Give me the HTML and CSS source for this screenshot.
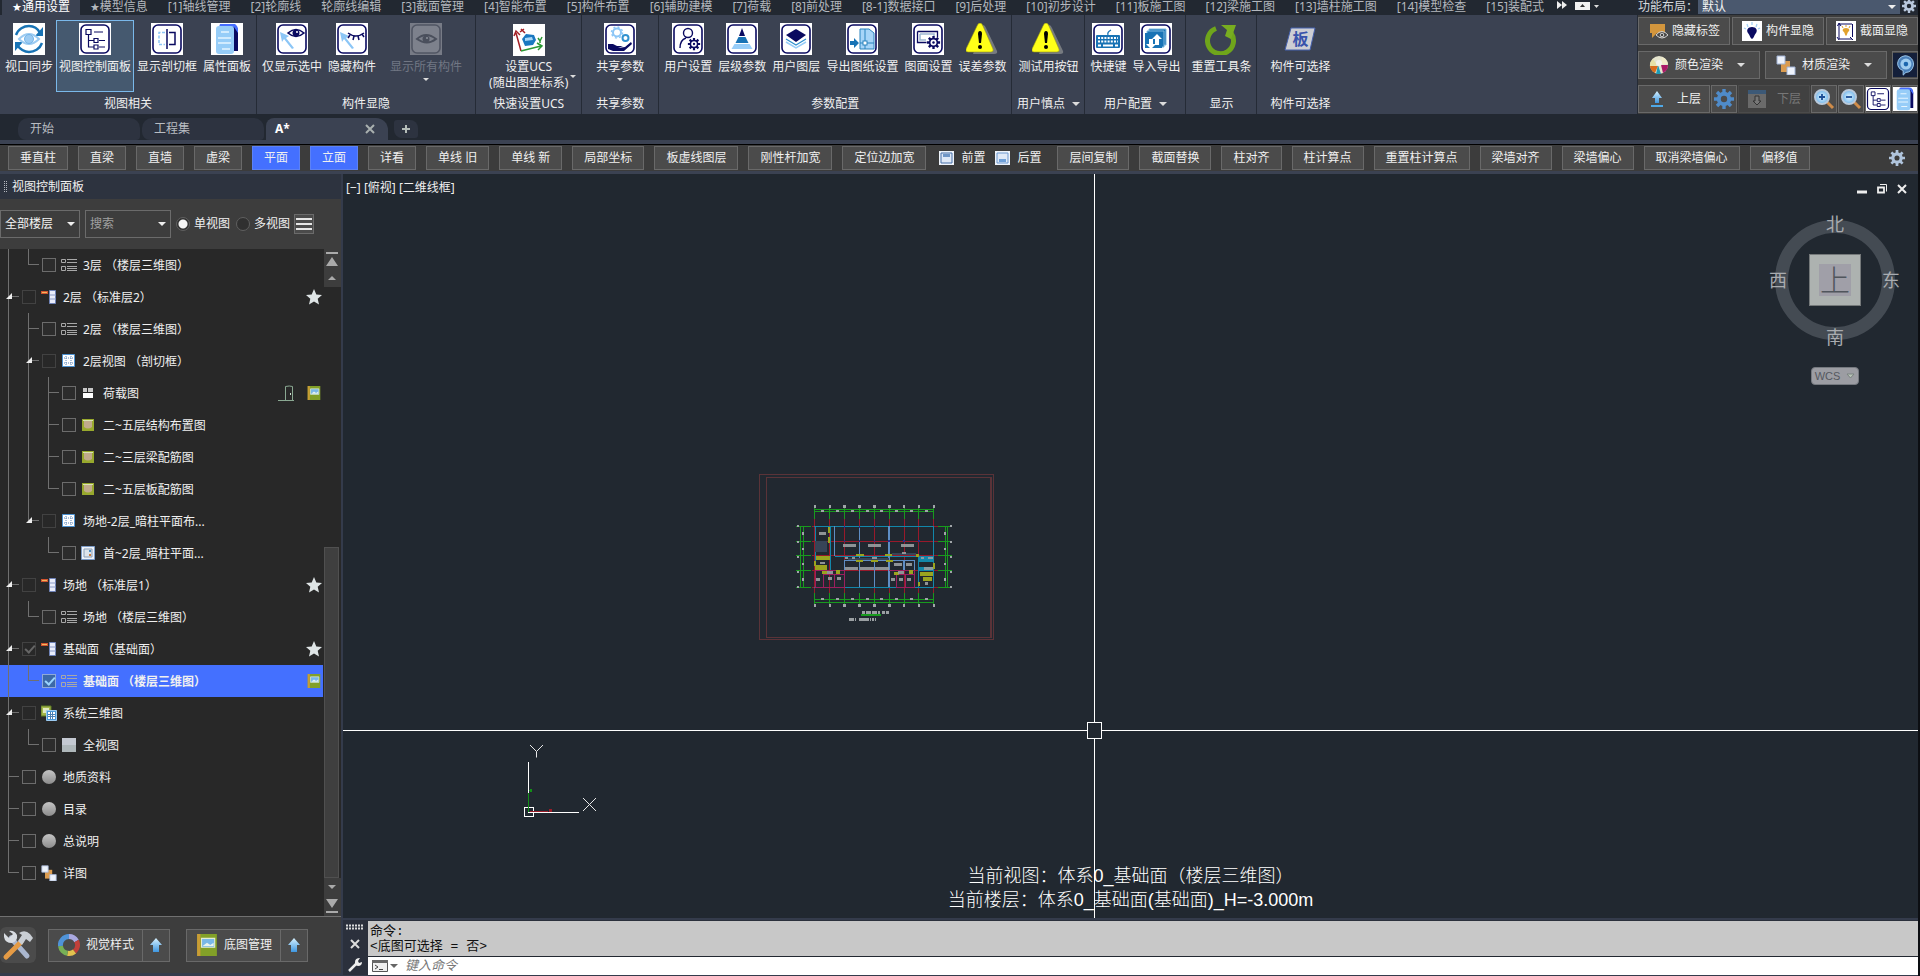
FILE: index.html
```html
<!DOCTYPE html>
<html lang="zh-CN">
<head>
<meta charset="utf-8">
<title>A*</title>
<link rel="stylesheet" href="styles.css">
</head>
<body>
<svg class="defs" aria-hidden="true">
  <defs>
    <linearGradient id="gBall" x1="0" y1="0" x2="0" y2="1"><stop offset="0" stop-color="#c4c4c4"/><stop offset="1" stop-color="#8c8c8c"/></linearGradient>
    <linearGradient id="gArrow" x1="0" y1="0" x2="0" y2="1"><stop offset="0" stop-color="#d8f2ff"/><stop offset="1" stop-color="#3d96e0"/></linearGradient>
    <radialGradient id="gLens"><stop offset="0" stop-color="#e8f8ff"/><stop offset="1" stop-color="#6db4ec"/></radialGradient>
  </defs>
  <symbol id="sync" viewBox="0 0 32 32"><rect width="32" height="32" fill="#fff"/><path d="M3 12C5 6 11 3 16 3c5 0 9 3 11 7M29 20c-2 6-8 9-13 9-5 0-9-3-12-7" fill="none" stroke="#1873b5" stroke-width="2.400"/><path d="M30 4v9h-8zM2 28v-9h8z" fill="#1873b5"/><path d="M6 16q10-10 20 0-10 10-20 0z" fill="#fff" stroke="#9ccbf2" stroke-width="2"/><circle cx="16" cy="16" r="4.500" fill="#9ccbf2" stroke="#74b4e8"/></symbol>
  <symbol id="tree" viewBox="0 0 32 32"><rect width="32" height="32" fill="#fff"/><rect x="2" y="2" width="28" height="28" rx="5" fill="#fff" stroke="#0a0a60" stroke-width="1.600"/><path d="M7 6.500h5v5H7zM9.500 11.500v12.500h5M9.500 17.500h5M15 15.500h4v4h-4zM15 22h4v4h-4zM15 9h9M20 17.500h6M20 24h6" fill="none" stroke="#0a0a60" stroke-width="1.200"/></symbol>
  <symbol id="clip" viewBox="0 0 32 32"><rect width="32" height="32" fill="#fff"/><rect x="2" y="2" width="28" height="28" rx="5" fill="#fff" stroke="#0a0a60" stroke-width="1.600"/><path d="M14 9.500H8v12h6" fill="none" stroke="#8ec6f5" stroke-width="1.500" stroke-dasharray="3 1.500"/><path d="M16 6v20M18 9.500h6v12h-6" fill="none" stroke="#0a0a60" stroke-width="1.500"/></symbol>
  <symbol id="props" viewBox="0 0 32 32"><rect width="32" height="32" fill="#fff"/><path d="M10 1h12q5 2 5 7v20h-4V6H8z" fill="#0a0a60"/><path d="M9 1h15q3 2 3 6v3l-4-6H8z" fill="#456dff"/><rect x="5" y="3" width="18" height="28" rx="3" fill="#97cdf8"/><path d="M10 9h8M7 15h13M7 20h13M11 26h8" stroke="#e6f5ff" stroke-width="1.500"/></symbol>
  <symbol id="pickEye" viewBox="0 0 32 32"><rect width="32" height="32" fill="#fff"/><rect x="2" y="2" width="28" height="28" rx="5" fill="#fff" stroke="#0a0a60" stroke-width="1.600"/><path d="M4 9l9 4-3 2 8 10-2 1-8-10-2 3z" fill="#8cc6f6"/><path d="M12 10q8-7 16 0-8 7-16 0z" fill="#fff" stroke="#0a0a60" stroke-width="1.600"/><circle cx="20" cy="10" r="3.500" fill="#0a0a60"/><circle cx="21" cy="9" r="1" fill="#fff"/></symbol>
  <symbol id="hideEye" viewBox="0 0 32 32"><rect width="32" height="32" fill="#fff"/><rect x="2" y="2" width="28" height="28" rx="5" fill="#fff" stroke="#0a0a60" stroke-width="1.600"/><path d="M4 9l9 4-3 2 8 10-2 1-8-10-2 3z" fill="#8cc6f6"/><path d="M12 10q8 6 16 0M14 12l-2 3M18 13l-1 4M22 13l1 4M26 11l2 3" fill="none" stroke="#0a0a60" stroke-width="1.500"/></symbol>
  <symbol id="allEye" viewBox="0 0 32 32"><rect width="32" height="32" fill="#777b86"/><rect x="2" y="2" width="28" height="28" rx="5" fill="#7d818c" stroke="#505563" stroke-width="1.600"/><path d="M7 16q9-8 19 0-9 7-19 0z" fill="none" stroke="#4a4f5c" stroke-width="2"/><circle cx="16" cy="16" r="3.500" fill="#4a4f5c"/><circle cx="17" cy="15" r="1" fill="#8c909a"/></symbol>
  <symbol id="ucs" viewBox="0 0 32 32"><rect width="32" height="32" fill="#fff"/><path d="M8 27L3 9M1 12l2-5 4 4M7 8l4-3M8 5l4 4" fill="none" stroke="#a31f25" stroke-width="1.500"/><path d="M8 27l20-5M24 19l5 3-4 4M25 14l2 3 2-4M27 17v2" fill="none" stroke="#2b9a35" stroke-width="1.500"/><path d="M9 15l4-5 8 1 2 5-3 5-8 1z" fill="#1a78c0"/><path d="M12 14l7-1 1 3-8 1z" fill="#a9d7f7"/></symbol>
  <symbol id="share" viewBox="0 0 32 32"><rect width="32" height="32" fill="#fff"/><rect x="2" y="2" width="28" height="28" rx="5" fill="#fff" stroke="#0a0a60" stroke-width="1.600"/><circle cx="13" cy="9.500" r="4" fill="none" stroke="#8cc6f6" stroke-width="2"/><circle cx="13" cy="9.500" r="5.500" fill="none" stroke="#8cc6f6" stroke-width="1.500" stroke-dasharray="2 2.300"/><circle cx="21.500" cy="15" r="3" fill="none" stroke="#3191cf" stroke-width="2"/><path d="M4 21h5l4 2h6l-5 2 7-1 6-5 1 2-8 7H9l-5-2z" fill="#0a0a60"/></symbol>
  <symbol id="gearS" viewBox="0 0 16 16"><circle cx="8" cy="8" r="5" fill="#0a0a60"/><path d="M8 1v14M1 8h14M3 3l10 10M13 3L3 13" stroke="#0a0a60" stroke-width="2.500"/><circle cx="8" cy="8" r="3.200" fill="#fff"/><circle cx="8" cy="8" r="1.300" fill="#0a0a60"/></symbol>
  <symbol id="user" viewBox="0 0 32 32"><rect width="32" height="32" fill="#fff"/><rect x="2" y="2" width="28" height="28" rx="5" fill="#fff" stroke="#0a0a60" stroke-width="1.600"/><circle cx="16" cy="10" r="4.500" fill="none" stroke="#0a0a60" stroke-width="1.400"/><path d="M8 25q0-8 6-10" fill="none" stroke="#0a0a60" stroke-width="1.400"/><use href="#gearS" x="15" y="14" width="14" height="14"/></symbol>
  <symbol id="level" viewBox="0 0 32 32"><rect width="32" height="32" fill="#fff"/><rect x="2" y="2" width="28" height="28" rx="5" fill="#fff" stroke="#0a0a60" stroke-width="1.600"/><path d="M16 5l3 8h-6z" fill="#0a0a60"/><path d="M12.500 14h7l3 6h-13z" fill="#1873b5"/><path d="M8.500 21h15l3 5h-21z" fill="#97cdf8"/></symbol>
  <symbol id="layers" viewBox="0 0 32 32"><rect width="32" height="32" fill="#fff"/><rect x="2" y="2" width="28" height="28" rx="5" fill="#fff" stroke="#0a0a60" stroke-width="1.600"/><path d="M16 6l10 6-10 7-10-7z" fill="#0a0a60"/><path d="M6 16l10 6 10-6" fill="none" stroke="#3191cf" stroke-width="1.300"/><path d="M6 19l10 6 10-6" fill="none" stroke="#97cdf8" stroke-width="1.500"/></symbol>
  <symbol id="sheet" viewBox="0 0 32 32"><rect width="32" height="32" fill="#fff"/><rect x="2" y="2" width="28" height="28" rx="5" fill="#fff" stroke="#0a0a60" stroke-width="1.600"/><path d="M14 6h9l5 4v16H14z" fill="#a7d5f8" stroke="#2b83bd"/><path d="M19 6v20M14 20h14" stroke="#2b83bd"/><rect x="17" y="18" width="4" height="4" fill="#fff" stroke="#2b83bd"/><path d="M4 18h4v-3l5 5-5 5v-3H4z" fill="#1873b5"/></symbol>
  <symbol id="draw" viewBox="0 0 32 32"><rect width="32" height="32" fill="#fff"/><rect x="2" y="2" width="28" height="28" rx="5" fill="#fff" stroke="#0a0a60" stroke-width="1.600"/><path d="M5.500 8.500h20v6M5.500 8.500v11h9" fill="none" stroke="#0a0a60" stroke-width="1.300"/><path d="M8 11h14v3M8 11v6h6" fill="none" stroke="#9db7d2" stroke-width="1.500"/><use href="#gearS" x="14" y="12" width="15" height="15"/></symbol>
  <symbol id="warn" viewBox="0 0 32 32"><path d="M17 2q2 0 3 3l11 23q1 3-3 3H7z" fill="#777b80"/><path d="M14 0q2 0 3 3l10 23q1 3-2 3H2q-3 0-2-3L11 3q1-3 3-3z" fill="#ffff18" stroke="#9a9a10" stroke-width=".600"/><path d="M12 11q0-3 2-3t2 3l-1 9h-2z"/><circle cx="14" cy="24" r="2"/></symbol>
  <symbol id="keys" viewBox="0 0 32 32"><rect width="32" height="32" fill="#fff"/><rect x="2" y="2" width="28" height="28" rx="5" fill="#fff" stroke="#0a0a60" stroke-width="1.600"/><path d="M16 12q-1-3 3-5" fill="none" stroke="#1873b5" stroke-width="1.300"/><rect x="4" y="12" width="24" height="13" rx="1" fill="#1873b5"/><path d="M6 15h20M6 18.500h20" stroke="#fff" stroke-width="2" stroke-dasharray="2 1.200"/><path d="M6 22.500h3M11 22.500h10M23 22.500h3" stroke="#fff" stroke-width="2"/></symbol>
  <symbol id="inout" viewBox="0 0 32 32"><rect width="32" height="32" fill="#fff"/><rect x="2" y="2" width="28" height="28" rx="5" fill="#fff" stroke="#0a0a60" stroke-width="1.600"/><path d="M9 6h17v16H9z" fill="#1873b5" stroke="#7cb8df"/><path d="M7 8h17v16H7z" fill="#1873b5" stroke="#7cb8df"/><path d="M5 10h17v15H5z" fill="#1873b5"/><path d="M17 11l5 5h-3v6h-4v-6h-3zM11 26l-5-5h3v-5h4v5h3z" fill="#fff"/></symbol>
  <symbol id="reset" viewBox="0 0 32 32"><path d="M11 5.500A13 13 0 1 0 26 10" fill="none" stroke="#6fa51b" stroke-width="5"/><path d="M16 2h15l-5 14-6-3 2-6z" fill="#78ad20"/></symbol>
  <symbol id="slab" viewBox="0 0 32 32"><path d="M7 5h24l-5 22H1z" fill="#cdced4" stroke="#4560ad"/></symbol>
  <symbol id="gear" viewBox="0 0 20 20"><g stroke="currentColor"><circle cx="10" cy="10" r="5.200" fill="none" stroke-width="4"/><path d="M10 0v4M10 16v4M0 10h4M16 10h4M3 3l3 3M14 14l3 3M17 3l-3 3M6 14l-3 3" stroke-width="3.400"/></g></symbol>
  <symbol id="tag" viewBox="0 0 20 20"><path d="M2 3h15v9H9l-5 5v-5H2z" fill="#d3963d"/><path d="M8 14q6-7 12 0-6 6-12 0z" fill="#454545" stroke="#d4d4d4"/><circle cx="14" cy="14" r="1.800" fill="none" stroke="#d4d4d4"/></symbol>
  <symbol id="bulb" viewBox="0 0 20 20"><rect width="20" height="20" fill="#fff"/><path d="M10 6c4 0 6 3 4 6-2 2-2 5-4 6-2-1-2-4-4-6-2-3 0-6 4-6z" fill="#0a0a60"/><path d="M10 1v3M5 3l1 3M15 3l-1 3M2 7l2 1M18 7l-2 1" stroke="#a5d2f5" stroke-width="1.300"/></symbol>
  <symbol id="secBulb" viewBox="0 0 20 20"><rect width="20" height="20" fill="#fff"/><path d="M3 3h13M3 3v15h13M16.500 3v13M1.500 5L3 2l2 3M1 16l2 3M14 16l3 3" fill="none" stroke="#0a0a60"/><path d="M10 7c4 0 4 3 2 4-1 2-1 3-2 4-1-1-1-2-2-4-2-1-2-4 2-4z" fill="#e1a12c"/><path d="M10 4v2M6 5l1 2M14 5l-1 2" stroke="#e1a12c"/></symbol>
  <symbol id="ball" viewBox="0 0 20 20"><circle cx="10" cy="10" r="9" fill="#e6e5cf"/><path d="M4 4a9 9 0 0 0-3 8l7-2z" fill="#e8e1a5"/><path d="M1 11a9 9 0 0 0 5 7l3-7z" fill="#d96b1c"/><path d="M13 2a9 9 0 0 1 6 7l-7 0z" fill="#f0eac9"/><path d="M19 10a9 9 0 0 1-5 8l-2-8z" fill="#a91867"/><path d="M9 10l3 9H7z" fill="#1e9bb5"/><circle cx="10" cy="8" r="3" fill="#f3f2ea"/></symbol>
  <symbol id="mats" viewBox="0 0 20 20"><path d="M5 6h9v11H5z" fill="#db9c50"/><path d="M1 1h8v8H1zM11 12h8v8h-8z" fill="#eef3fc" stroke="#9fb1d3"/></symbol>
  <symbol id="orb" viewBox="0 0 26 26"><rect width="26" height="26" fill="#141f3a"/><path d="M13 3a9 9 0 0 1 9 11q-2 7-8 7l-3 3v-5Q5 17 5 11q1-7 8-8z" fill="#4a7fb9" stroke="#a4cef0"/><circle cx="14" cy="12" r="6" fill="#9fcdf0"/><circle cx="14" cy="12" r="2.500" fill="#1b66ae"/></symbol>
  <symbol id="up" viewBox="0 0 20 20"><path d="M10 2l5 7h-3v5H8V9H5z" fill="url(#gArrow)"/><path d="M4 17h12" stroke="#4fa8e6" stroke-width="2"/></symbol>
  <symbol id="down" viewBox="0 0 20 20"><path d="M1 1h18v18H1z" fill="#6a6a6a"/><path d="M1 1h18v4H1z" fill="#3c5977"/><path d="M10 16l-4-4h2V7h4v5h2z" fill="#777" stroke="#333"/></symbol>
  <symbol id="zin" viewBox="0 0 22 22"><path d="M14 14l6 6" stroke="#cf8c4a" stroke-width="3"/><circle cx="9" cy="9" r="7" fill="url(#gLens)" stroke="#b8c9db" stroke-width="2"/><path d="M9 6v6M6 9h6" stroke="#1b4d96" stroke-width="1.800"/></symbol>
  <symbol id="zout" viewBox="0 0 22 22"><path d="M14 14l6 6" stroke="#cf8c4a" stroke-width="3"/><circle cx="9" cy="9" r="7" fill="url(#gLens)" stroke="#b8c9db" stroke-width="2"/><path d="M6 9h6" stroke="#1b4d96" stroke-width="1.800"/></symbol>
  <symbol id="front" viewBox="0 0 16 16"><path d="M0 1h15v14H0z" fill="#eef3fa"/><path d="M2 3h11v10H2z" fill="#dfe9f7" stroke="#456fa8"/><path d="M4 4h7v3H4z" fill="#6f96c6"/></symbol>
  <symbol id="back" viewBox="0 0 16 16"><path d="M0 1h15v14H0z" fill="#eef3fa"/><path d="M2 3h11v10H2z" fill="#dfe9f7" stroke="#6d98cf"/><path d="M4 9h7v3H4z" fill="#6fa0d8"/></symbol>
  <symbol id="list" viewBox="0 0 16 14"><path d="M.500 1.500h4v3h-4zM.500 8.500h4v4h-4z" fill="none" stroke="#a8a8a8"/><path d="M6 1.500h10M6 4.500h10M6 8.500h10M6 10.500h10M6 12.500h10" stroke="#a8a8a8"/></symbol>
  <symbol id="floor" viewBox="0 0 16 16"><path d="M0 3.500h7" stroke="#d2552f" stroke-width="3"/><path d="M1 3.500h5" stroke="#f1b75d"/><path d="M8.500 1.500h6v13h-6z" fill="#e9edfb" stroke="#6f83b8"/><path d="M9 6h6M9 10h6" stroke="#8c9cc8"/></symbol>
  <symbol id="grid" viewBox="0 0 16 16"><path d="M1.500 1.500h12v12h-12z" fill="#fff" stroke="#4e93d2"/><path d="M3 5h10M3 10h10M5 3v10M10 3v10" stroke="#5b84b8" stroke-dasharray="1 1"/></symbol>
  <symbol id="load" viewBox="0 0 16 16"><path d="M2 3h4v4H2zM7 3h5v4H7z" fill="#c8c8c8"/><path d="M2 8h10v5H2z" fill="#fff"/></symbol>
  <symbol id="fig" viewBox="0 0 16 16"><path d="M1 2h12v12H1z" fill="#98a92d"/><path d="M3 4h8v6q-4 3-8 0z" fill="#c0aa8c"/><path d="M2 3.500h10" stroke="#d9e3b0"/></symbol>
  <symbol id="plan" viewBox="0 0 16 16"><path d="M.500 1.500h13v13H.500z" fill="#eef3fa" stroke="#7d9cc8"/><path d="M3 4h8v8H3z" fill="#dde4ec" stroke="#8a9db5"/><path d="M8 5h2v2H8z" fill="#4a8fc4"/><path d="M8 9h2v2H8z" fill="#c97b3e"/></symbol>
  <symbol id="sys" viewBox="0 0 16 16"><path d="M0 1h10v10H0z" fill="#a4b64b" stroke="#5d7a22"/><path d="M2 3h6v5H2z" fill="#e1e9c0"/><path d="M5.500 5.500h10v10h-10z" fill="#4b9ad9" stroke="#9ccaf0"/><path d="M7 7h7v7H7z" fill="#fff"/><path d="M7 9.500h7M7 11.500h7M9.500 7v7M11.500 7v7" stroke="#4b80b4"/></symbol>
  <symbol id="full" viewBox="0 0 16 16"><path d="M1 1h14v14H1z" fill="#c4c9d2"/><path d="M1 8h14v7H1z" fill="#aeb7ba"/></symbol>
  <symbol id="dot" viewBox="0 0 16 16"><circle cx="8" cy="8" r="7" fill="url(#gBall)"/></symbol>
  <symbol id="star" viewBox="0 0 16 16"><path d="M8 0l2.300 5.400 5.700.500-4.300 3.900L13 15.500 8 12.500l-5 3 1.300-5.700L0 5.900l5.700-.500z" fill="#dfe5e6"/></symbol>
  <symbol id="door" viewBox="0 0 16 16"><path d="M0 15.500h16M7.500 15V1.500q4-1 7 0V15" fill="none" stroke="#8aa892"/><path d="M12 8h1v2h-1z" fill="#cfe2d3"/></symbol>
  <symbol id="pic" viewBox="0 0 20 20"><path d="M1 0h18v20H1z" fill="#82a028"/><path d="M1 0h3v20H1z" fill="#c99c35"/><path d="M5 4h12v8H5z" fill="#79b8e8" stroke="#e3ecd4"/><path d="M6 11l4-3 3 2 3-2v3z" fill="#e8f3ee"/></symbol>
  <symbol id="wheel" viewBox="0 0 22 22"><g fill="none" stroke-width="5"><path d="M11 2.500a8.500 8.500 0 0 1 7.500 4.500" stroke="#a9a8e0"/><path d="M18.500 7a8.500 8.500 0 0 1-2 10.500" stroke="#c1403a"/><path d="M16.500 17.500a8.500 8.500 0 0 1-7 1.800" stroke="#e2c24e"/><path d="M9.500 19.300a8.500 8.500 0 0 1-7-7.300" stroke="#77b056"/><path d="M2.500 12A8.500 8.500 0 0 1 11 2.500" stroke="#4f93d8"/></g></symbol>
  <symbol id="tools" viewBox="0 0 32 32"><path d="M9 9l16 18" stroke="#aab7cf" stroke-width="5" stroke-linecap="round"/><path d="M2 4l5 5 4-4-4-3q5-1 8 4 1 6-5 8Q3 14 2 8z" fill="#d9dde2"/><path d="M4 28L19 13" stroke="#e59b45" stroke-width="5" stroke-linecap="round"/><path d="M17 4q6-4 11 1l3 4-3 4-4-3-4 6-4-4 4-6z" fill="#c9ced4"/></symbol>
</svg>

<header class="menubar">
  <nav class="menus">
    <a class="menu active" href="#"><span class="st">★</span>通用设置</a><a class="menu" href="#"><span class="st">★</span>模型信息</a><a class="menu" href="#">[1]轴线管理</a><a class="menu" href="#">[2]轮廓线</a><a class="menu" href="#">轮廓线编辑</a><a class="menu" href="#">[3]截面管理</a><a class="menu" href="#">[4]智能布置</a><a class="menu" href="#">[5]构件布置</a><a class="menu" href="#">[6]辅助建模</a><a class="menu" href="#">[7]荷载</a><a class="menu" href="#">[8]前处理</a><a class="menu" href="#">[8-1]数据接口</a><a class="menu" href="#">[9]后处理</a><a class="menu" href="#">[10]初步设计</a><a class="menu" href="#">[11]板施工图</a><a class="menu" href="#">[12]梁施工图</a><a class="menu" href="#">[13]墙柱施工图</a><a class="menu" href="#">[14]模型检查</a><a class="menu" href="#">[15]装配式</a>
    <svg class="more" viewBox="0 0 42 12"><path d="M0 1l5 4-5 4zM5 1l5 4-5 4z" fill="#eee"/><path d="M18 2h15v8H18z" fill="#f2f2f2"/><path d="M23 7l2.500-3 2.500 3z" fill="#333"/><path d="M37 5h5l-2.500 3z" fill="#ddd"/></svg>
  </nav>
  <div class="layout-pick">
    <label for="layout">功能布局：</label>
    <span class="pick"><select id="layout"><option>默认</option></select></span>
    <button class="bare" aria-label="设置"><svg class="i14"><use href="#gear"/></svg></button>
  </div>
</header>

<section class="ribbon">
  <div class="group"><div class="btns">
    <button class="rb"><svg class="i32"><use href="#sync"/></svg>视口同步</button>
    <button class="rb on"><svg class="i32"><use href="#tree"/></svg>视图控制面板</button>
    <button class="rb"><svg class="i32"><use href="#clip"/></svg>显示剖切框</button>
    <button class="rb"><svg class="i32"><use href="#props"/></svg>属性面板</button></div><div class="gname">视图相关</div></div>
  <div class="group"><div class="btns">
    <button class="rb"><svg class="i32"><use href="#pickEye"/></svg>仅显示选中</button>
    <button class="rb"><svg class="i32"><use href="#hideEye"/></svg>隐藏构件</button>
    <button class="rb roomy" disabled><svg class="i32"><use href="#allEye"/></svg>显示所有构件<i class="tri"></i></button></div><div class="gname">构件显隐</div></div>
  <div class="group"><div class="btns">
    <button class="rb roomy two"><svg class="i32"><use href="#ucs"/></svg>设置UCS<br>(随出图坐标系)<i class="tri side"></i></button></div><div class="gname">快速设置UCS</div></div>
  <div class="group snug"><div class="btns">
    <button class="rb roomy"><svg class="i32"><use href="#share"/></svg>共享参数<i class="tri"></i></button></div><div class="gname">共享参数</div></div>
  <div class="group"><div class="btns">
    <button class="rb"><svg class="i32"><use href="#user"/></svg>用户设置</button>
    <button class="rb"><svg class="i32"><use href="#level"/></svg>层级参数</button>
    <button class="rb"><svg class="i32"><use href="#layers"/></svg>用户图层</button>
    <button class="rb"><svg class="i32"><use href="#sheet"/></svg>导出图纸设置</button>
    <button class="rb"><svg class="i32"><use href="#draw"/></svg>图面设置</button>
    <button class="rb"><svg class="i32"><use href="#warn"/></svg>误差参数</button></div><div class="gname">参数配置</div></div>
  <div class="group snug"><div class="btns">
    <button class="rb"><svg class="i32"><use href="#warn"/></svg>测试用按钮</button></div><div class="gname">用户慎点<i class="tri big"></i></div></div>
  <div class="group"><div class="btns">
    <button class="rb"><svg class="i32"><use href="#keys"/></svg>快捷键</button>
    <button class="rb"><svg class="i32"><use href="#inout"/></svg>导入导出</button></div><div class="gname">用户配置<i class="tri big"></i></div></div>
  <div class="group"><div class="btns">
    <button class="rb"><svg class="i32"><use href="#reset"/></svg>重置工具条</button></div><div class="gname">显示</div></div>
  <div class="group last"><div class="btns">
    <button class="rb roomy"><span class="slab"><svg class="i32"><use href="#slab"/></svg><b>板</b></span>构件可选择<i class="tri"></i></button></div><div class="gname">构件可选择</div></div>

  <aside class="quick">
    <div class="qrow even">
      <button><svg class="i20"><use href="#tag"/></svg>隐藏标签</button>
      <button><svg class="i20"><use href="#bulb"/></svg>构件显隐</button>
      <button><svg class="i20"><use href="#secBulb"/></svg>截面显隐</button>
    </div>
    <div class="qrow render">
      <button class="wide"><svg class="i20"><use href="#ball"/></svg>颜色渲染<i class="tri big"></i></button>
      <button class="wide"><svg class="i20"><use href="#mats"/></svg>材质渲染<i class="tri big"></i></button>
      <button class="sq" aria-label="渲染"><svg class="i24"><use href="#orb"/></svg></button>
    </div>
    <div class="qrow tight">
      <button class="lvl"><svg class="i20"><use href="#up"/></svg>上层</button>
      <button class="sq blue" aria-label="楼层设置"><svg class="i20"><use href="#gear"/></svg></button>
      <button class="lvl" disabled><svg class="i20"><use href="#down"/></svg>下层</button>
      <button class="sq" aria-label="放大"><svg class="i22"><use href="#zin"/></svg></button>
      <button class="sq" aria-label="缩小"><svg class="i22"><use href="#zout"/></svg></button>
      <button class="sq" aria-label="视图控制面板"><svg class="i24"><use href="#tree"/></svg></button>
      <button class="sq" aria-label="属性面板"><svg class="i24"><use href="#props"/></svg></button>
    </div>
  </aside>
</section>

<nav class="files">
  <a class="file" href="#">开始</a><a class="file" href="#">工程集</a>
  <div class="file cur"><a href="#">A*</a><button class="bare" aria-label="关闭"><svg class="i10" viewBox="0 0 10 10"><path d="M1 1l8 8M9 1L1 9" stroke="#a9b0af" stroke-width="2"/></svg></button></div>
  <button class="add" aria-label="新建"><svg class="i10" viewBox="0 0 10 10"><path d="M5 1v8M1 5h8" stroke="#b4bcb8" stroke-width="2"/></svg></button>
</nav>

<div class="strip">
  <button>垂直柱</button><button>直梁</button><button>直墙</button><button>虚梁</button><button class="on">平面</button><button class="on">立面</button><button>详看</button><button>单线 旧</button><button>单线 新</button><button>局部坐标</button><button>板虚线图层</button><button>刚性杆加宽</button><button>定位边加宽</button>
  <span class="order"><button class="bare"><svg class="i16"><use href="#front"/></svg>前置</button><button class="bare"><svg class="i16"><use href="#back"/></svg>后置</button></span>
  <button>层间复制</button><button>截面替换</button><button>柱对齐</button><button>柱计算点</button><button>重置柱计算点</button><button>梁墙对齐</button><button>梁墙偏心</button><button>取消梁墙偏心</button><button>偏移值</button>
  <button class="bare cfg" aria-label="设置"><svg class="i16"><use href="#gear"/></svg></button>
</div>

<main class="work">
  <section class="panel">
    <h1><svg class="dots" viewBox="0 0 5 11"><path d="M1.500 0v11M3.500 0v11" stroke="#b5b9c0" stroke-dasharray="1 1"/></svg>视图控制面板</h1>
    <div class="filter">
      <span class="pick floors"><select aria-label="楼层"><option>全部楼层</option></select></span>
      <span class="pick find"><input type="text" aria-label="搜索" placeholder="搜索"></span>
      <label><input type="radio" name="v" checked>单视图</label>
      <label><input type="radio" name="v">多视图</label>
      <button class="ham" aria-label="菜单"><svg viewBox="0 0 16 14"><path d="M0 2h16M0 7h16M0 12h16" stroke="#e6e6e6" stroke-width="2"/></svg></button>
    </div>
    <div class="treebox">
      <ul class="tree">
        <li><i class="g line"></i><i class="g end"></i><label><input type="checkbox"><svg class="i16"><use href="#list"/></svg><span>3层 （楼层三维图）</span></label></li>
        <li><i class="g tee open"></i><label><input type="checkbox" class="dim"><svg class="i16"><use href="#floor"/></svg><span>2层 （标准层2）</span></label><svg class="i16 tail"><use href="#star"/></svg></li>
        <li><i class="g line"></i><i class="g tee"></i><label><input type="checkbox"><svg class="i16"><use href="#list"/></svg><span>2层 （楼层三维图）</span></label></li>
        <li><i class="g line"></i><i class="g tee open"></i><label><input type="checkbox" class="dim"><svg class="i16"><use href="#grid"/></svg><span>2层视图 （剖切框）</span></label></li>
        <li><i class="g line"></i><i class="g line"></i><i class="g tee"></i><label><input type="checkbox"><svg class="i16"><use href="#load"/></svg><span>荷载图</span></label><svg class="i16 tail"><use href="#door"/></svg><svg class="i14 next"><use href="#pic"/></svg></li>
        <li><i class="g line"></i><i class="g line"></i><i class="g tee"></i><label><input type="checkbox"><svg class="i16"><use href="#fig"/></svg><span>二~五层结构布置图</span></label></li>
        <li><i class="g line"></i><i class="g line"></i><i class="g tee"></i><label><input type="checkbox"><svg class="i16"><use href="#fig"/></svg><span>二~三层梁配筋图</span></label></li>
        <li><i class="g line"></i><i class="g line"></i><i class="g end"></i><label><input type="checkbox"><svg class="i16"><use href="#fig"/></svg><span>二~五层板配筋图</span></label></li>
        <li><i class="g line"></i><i class="g end open"></i><label><input type="checkbox" class="dim"><svg class="i16"><use href="#grid"/></svg><span>场地-2层_暗柱平面布...</span></label></li>
        <li><i class="g line"></i><i class="g"></i><i class="g end"></i><label><input type="checkbox"><svg class="i16"><use href="#plan"/></svg><span>首~2层_暗柱平面...</span></label></li>
        <li><i class="g tee open"></i><label><input type="checkbox" class="dim"><svg class="i16"><use href="#floor"/></svg><span>场地 （标准层1）</span></label><svg class="i16 tail"><use href="#star"/></svg></li>
        <li><i class="g line"></i><i class="g end"></i><label><input type="checkbox"><svg class="i16"><use href="#list"/></svg><span>场地 （楼层三维图）</span></label></li>
        <li><i class="g tee open"></i><label><input type="checkbox" class="dim" checked><svg class="i16"><use href="#floor"/></svg><span>基础面 （基础面）</span></label><svg class="i16 tail"><use href="#star"/></svg></li>
        <li class="sel"><i class="g line"></i><i class="g end"></i><label><input type="checkbox" checked><svg class="i16"><use href="#list"/></svg><span>基础面 （楼层三维图）</span></label><svg class="i14 tail"><use href="#pic"/></svg></li>
        <li><i class="g tee open"></i><label><input type="checkbox" class="dim"><svg class="i16"><use href="#sys"/></svg><span>系统三维图</span></label></li>
        <li><i class="g line"></i><i class="g end"></i><label><input type="checkbox"><svg class="i16"><use href="#full"/></svg><span>全视图</span></label></li>
        <li><i class="g tee"></i><label><input type="checkbox"><svg class="i16"><use href="#dot"/></svg><span>地质资料</span></label></li>
        <li><i class="g tee"></i><label><input type="checkbox"><svg class="i16"><use href="#dot"/></svg><span>目录</span></label></li>
        <li><i class="g tee"></i><label><input type="checkbox"><svg class="i16"><use href="#dot"/></svg><span>总说明</span></label></li>
        <li><i class="g end"></i><label><input type="checkbox"><svg class="i16"><use href="#mats"/></svg><span>详图</span></label></li>
      </ul>
      <div class="scroll">
        <svg viewBox="0 0 16 38"><path d="M2 3h12v2H2zM8 8l6 9H2zM8 27l4 4H4z" fill="#aaa"/></svg>
        <div class="track"><div class="thumb"></div></div>
        <svg viewBox="0 0 16 38"><path d="M2 33h12v2H2zM8 30l6-9H2zM8 11l4-4H4z" fill="#aaa"/></svg>
      </div>
    </div>
    <footer class="foot">
      <button class="toolbtn" aria-label="工具"><svg class="i32"><use href="#tools"/></svg></button>
      <div class="split"><button><svg class="i22"><use href="#wheel"/></svg>视觉样式</button><button class="upb" aria-label="展开视觉样式"><svg viewBox="0 0 12 14"><path d="M6 0l6 7H9v7H3V7H0z" fill="url(#gArrow)"/></svg></button></div>
      <div class="split"><button><svg class="i22"><use href="#pic"/></svg>底图管理</button><button class="upb" aria-label="展开底图管理"><svg viewBox="0 0 12 14"><path d="M6 0l6 7H9v7H3V7H0z" fill="url(#gArrow)"/></svg></button></div>
    </footer>
  </section>

  <section class="view">
    <div class="canvas">
      <div class="vlabel">[−] [俯视] [二维线框]</div>
      <div class="winbtns">
        <button class="bare" aria-label="最小化"><svg class="i10" viewBox="0 0 10 10"><path d="M0 8h10" stroke="#eee" stroke-width="3"/></svg></button>
        <button class="bare" aria-label="还原"><svg class="i10" viewBox="0 0 10 10"><path d="M1 3.500h6v5H1z" fill="none" stroke="#eee" stroke-width="1.800"/><path d="M3 .500h6.500v7" fill="none" stroke="#eee"/></svg></button>
        <button class="bare" aria-label="关闭"><svg class="i10" viewBox="0 0 10 10"><path d="M1 1l8 8M9 1L1 9" stroke="#eee" stroke-width="2"/></svg></button>
      </div>

      <svg class="plan" viewBox="0 0 780 555" shape-rendering="crispEdges">
        <g fill="none" stroke="#5a3338" stroke-width="3"><path d="M28 28h703v495H28zM49 37h675v480H49z"/><path d="M721 37v480"/></g>
        <path d="M193 184V383M238 160V383M283 160V383M328 160V272M373 160V383M417 160V383M462 160V383M505 160V383M550 160V383M193 160V184M185 184H565M185 229H565M185 271H565M185 317H565M185 367H565" stroke="#98192b" stroke-width="3"/>
        <g stroke="#189a1e" stroke-width="3"><path d="M193 133H552M193 139H552M193 403H552M193 412H552M151 184V368M160 184V368M586 184V368M592 184V368"/><path d="M193 125V162M238 125V162M283 125V162M328 125V162M373 125V162M417 125V162M462 125V162M505 125V162M550 125V162M193 383V422M238 383V422M283 383V422M328 383V422M373 383V422M417 383V422M462 383V422M505 383V422M550 383V422M139 184H183M139 229H183M139 271H183M139 317H183M139 367H183M564 184H606M564 229H606M564 271H606M564 317H606M564 367H606"/></g>
        <path d="M193 184H551V367H283M195 184V367H240M241 184V317M256 273H550M505 273V367M193 367H550" fill="none" stroke="#1287aa" stroke-width="3"/>
        <path d="M253 184V272M328 184V367M373 287V367M417 184V367M283 287H494M283 287V323M462 287V317M494 287V317" fill="none" stroke="#5e8dc4" stroke-width="4"/>
        <path d="M197 317H283V367H197zM221 328V367M253 328V367M221 328H283M417 317H494V367H440V328H494M466 328V367" fill="none" stroke="#9b1f5e" stroke-width="3"/>
        <path d="M196 228h35v34h-35zM426 264h72v7h-72zM295 278h122v6H295z" fill="#374457"/>
        <path d="M198 273h43v13h-43zM196 301h35v14h-35zM509 320h41v12h-41zM520 336h26v11h-26zM318 268h24v6h-24zM405 268h22v6h-22zM318 285h22v6h-22zM363 285h22v6h-22zM408 285h22v6h-22zM216 318h14v9h-14zM258 314h12v12h-12zM433 320h14v10h-14zM476 316h14v12h-14zM498 268h8v8h-8zM235 187h6v18h-6zM234 215h6v20h-6zM192 288h6v14h-6zM548 293h6v20h-6zM504 350h6v14h-6z" fill="#9aa41f"/>
        <path d="M508 276h42v14h-42zM508 305h42v12h-42z" fill="#1287aa"/>
        <path d="M207 202h20v7h-20zM279 237h38v8h-38zM354 237h38v8h-38zM453 237h38v8h-38zM456 261h12v7h-12zM285 306h40v8h-40zM330 306h42v8h-42zM376 306h40v8h-40zM432 295h23v7h-23zM468 295h18v7h-18zM199 339h12v8h-12zM234 337h11v7h-11zM262 337h12v8h-12zM424 339h11v8h-11zM447 339h11v8h-11zM471 339h12v8h-12zM232 319h17v8h-17zM444 319h17v8h-17zM521 306h28v8h-28zM513 277h8v6h-8zM534 277h14v6h-14zM211 290h14v8h-14zM285 276h9v6h-9zM305 276h9v6h-9zM365 276h16v6h-16zM525 352h8v8h-8z" fill="#9a9fa2" fill-opacity=".9"/>
        <path d="M337 441h53M397 441h19" stroke="#9a9fa2" stroke-width="9" stroke-dasharray="9 2 6 1"/>
        <path d="M298 462h24M327 462h51" stroke="#9a9fa2" stroke-width="9" stroke-dasharray="5 1 8 2"/>
        <path d="M191 125H556M191 422H556" stroke="#a0a5a8" stroke-width="8" stroke-dasharray="7 37.700"/>
        <path d="M144 181V371M603 181V371" stroke="#a0a5a8" stroke-width="6" stroke-dasharray="6 39.800"/>
        <path d="M213 138H535M213 402H535" stroke="#a0a5a8" stroke-width="6" stroke-dasharray="9 35.600"/>
        <path d="M158 202V350M585 202V350" stroke="#a0a5a8" stroke-width="5" stroke-dasharray="7 39"/>
        <path d="M333 450h60" stroke="#189a1e" stroke-width="5"/>
        <path d="M281 186h95M281 228h95M415 228h95" stroke="#2c2d8c" stroke-width="5" stroke-dasharray="5 40"/>
      </svg>

      <svg class="axes" viewBox="0 0 72 74" shape-rendering="crispEdges"><path d="M4.500 17v50.500M4.500 67.500H55M.500 62.500h9v9h-9z" fill="none" stroke="#fff"/><path d="M4.500 48v19M5 45.500h3" stroke="#128f17" stroke-width="1"/><path d="M6 44h2v3H6z" fill="#128f17"/><path d="M6 66.500h18" stroke="#9b1c28"/><path d="M25 64h3v3h-3z" fill="#9b1c28"/><path d="M6 0l6.500 6.500L19 0M12.500 6.500v6M59 53l13 13M72 53L59 66" stroke="#e8e8e8" fill="none" shape-rendering="auto"/></svg>

      <i class="hair h"></i><i class="hair v"></i><i class="pickbox"></i>

      <div class="cube">
        <span class="n">北</span><span class="w">西</span><span class="e">东</span><span class="s">南</span>
        <button class="face">上</button>
      </div>
      <button class="wcs">WCS<svg viewBox="0 0 9 6"><path d="M1 1h7L4.500 5z" fill="#b8c4b8" stroke="#7b8380"/></svg></button>
      <div class="status"><p>当前视图：体系0_基础面（楼层三维图）</p><p>当前楼层：体系0_基础面(基础面)_H=-3.000m</p></div>
    </div>
    <div class="cmd">
      <div class="cmdside">
        <svg class="grip" viewBox="0 0 18 6"><path d="M0 1.500h18M0 4.500h18" stroke="#ddd" stroke-width="2" stroke-dasharray="2 1"/></svg>
        <button class="bare" aria-label="关闭"><svg class="i10" viewBox="0 0 10 10"><path d="M1 1l8 8M9 1L1 9" stroke="#ddd" stroke-width="2"/></svg></button>
        <button class="bare" aria-label="自定义"><svg class="i14" viewBox="0 0 14 14"><path d="M1 13l7-7" stroke="#eee" stroke-width="2.500"/><path d="M7 4q0-4 5-4l-2 3 1 2 3-1q0 4-4 4L7 7z" fill="#eee"/></svg></button>
      </div>
      <div class="cmdmain">
        <div class="log">命令:<br>&lt;底图可选择&nbsp;=&nbsp;否&gt;</div>
        <div class="entry"><svg viewBox="0 0 26 12"><path d="M.500 .500h15v11H.500z" fill="#eee" stroke="#555"/><path d="M0 0h16v3H0z" fill="#666"/><path d="M3 5l3 2-3 2M7 9.500h4" fill="none" stroke="#444"/><path d="M18 4h8l-4 4z" fill="#666"/></svg><input type="text" aria-label="命令" placeholder="键入命令"></div>
      </div>
    </div>
  </section>
</main>
</body>
</html>
```
FILE: styles.css
```css
* { box-sizing: border-box; }
body {
  margin: 0;
  min-height: 100vh;
  display: flex;
  flex-direction: column;
  background: #3b4252;
  border-right: 2px solid #0c0e12;
  color: #f0f0f0;
  font: 12px/14px "Noto Sans", "Noto Sans CJK SC", sans-serif;
  white-space: nowrap;
}
button, input, select { font: inherit; color: inherit; margin: 0; }
button { padding: 0; border: 0; background: none; display: flex; align-items: center; justify-content: center; }
a { color: inherit; text-decoration: none; }
svg { display: block; flex: none; }
.defs { position: absolute; width: 0; height: 0; }
.i10 { width: 10px; height: 10px; }
.i14 { width: 14px; height: 14px; }
.i16 { width: 16px; height: 16px; }
.i20 { width: 20px; height: 20px; }
.i22 { width: 22px; height: 22px; }
.i24 { width: 24px; height: 24px; }
.i32 { width: 32px; height: 32px; }
.tri { border: 3px solid transparent; border-top: 3px solid #dcdcdc; border-bottom: 0; }
.tri.big { border-width: 4px 4px 0; margin-left: 7px; }

.menubar { display: flex; justify-content: space-between; background: #222831; height: 15px; }
.menus { display: flex; padding-left: 2px; color: #b4b8be; line-height: 13px; }
.menu { padding: 0 10px; height: 15px; }
.menu.active { background: #3b4252; color: #fff; }
.st { font-family: "DejaVu Sans", sans-serif; font-size: 11px; }
.more { width: 42px; height: 12px; margin-left: 3px; }
.layout-pick { display: flex; width: 280px; color: #d5d8dc; line-height: 13px; }
.layout-pick .pick { flex: 1; background: #4a586e; height: 14px; }
.layout-pick select { width: 100%; height: 14px; padding: 0 4px; line-height: 14px; }
.layout-pick button { width: 18px; height: 12px; color: #b9c8dc; }
.pick { position: relative; display: flex; }
.pick::after { content: ""; position: absolute; right: 4px; top: 50%; margin-top: -2px; border: 4px solid transparent; border-top-color: #eee; border-bottom: 0; pointer-events: none; }
select { appearance: none; background: none; border: 0; border-radius: 0; color: #f4f4f4; }

.ribbon { display: flex; background: #3b4252; }
.group { display: flex; flex-direction: column; align-items: center; padding: 5px 2px 0; border-right: 1px solid #252b36; }
.group.snug { padding: 5px 3px 0; }
.group.last { border: 0; }
.btns { display: flex; flex: 1; }
.rb { flex-direction: column; justify-content: flex-start; border: 1px solid transparent; padding: 2px 2px 0; height: 72px; }
.rb .i32 { margin-bottom: 5px; }
.rb .tri { margin-top: 4px; }
.rb.roomy { padding: 2px 10px 0; }
.rb.two { position: relative; display: block; line-height: 16px; }
.rb.two .i32 { margin: 0 auto 3px; }
.rb .side { position: absolute; right: 2px; top: 50px; }
.rb.on { background: #45596f; border-color: #7ab8ea; }
.rb:disabled { color: #717784; }
.slab { position: relative; }
.slab b { position: absolute; left: 8px; top: 8px; font-size: 16px; line-height: 16px; color: #3953ab; }
.gname { display: flex; align-items: center; line-height: 20px; }
.quick { margin-left: auto; width: 281px; background: #3d3d3d; border-left: 1px solid #252b36; padding: 2px 0 1px; display: flex; flex-direction: column; gap: 6px; }
.qrow { display: flex; height: 28px; gap: 2px; }
.qrow button { background: #4b4b4b; border: 1px solid #696969; gap: 4px; }
.qrow.even button { flex: 1; }
.qrow.render { gap: 5px; }
.qrow.render button { gap: 6px; padding-right: 4px; }
.qrow .wide { flex: 1; }
.wide .tri.big { margin-left: 8px; }
.qrow .sq, .qrow.render .sq { width: 26px; padding: 0; }
.qrow.tight { gap: 1px; }
.qrow .lvl { flex: 1; gap: 10px; }
.qrow .blue { color: #4f8bc9; }
.qrow button:disabled { background: #414141; border-color: #4b4b4b; color: #777; }

.files { display: flex; height: 26px; background: #222831; padding: 4px 0 0 18px; gap: 2px; color: #b9bdc2; }
.file { width: 122px; background: #2d3340; border-radius: 10px 10px 4px 8px; padding: 0 12px; line-height: 22px; display: flex; justify-content: space-between; align-items: center; }
.file.cur { background: #3b4252; color: #fff; font-weight: bold; padding: 0 13px 0 9px; border-radius: 8px 12px 0 0; }
.add { width: 24px; height: 18px; background: #2d3340; border-radius: 3px 8px 3px 8px; margin: 2px 0 0 4px; }

.strip { display: flex; align-items: center; gap: 10px; margin-top: 4px; height: 27px; padding: 1px 13px 1px 8px; background: #3c3c3c; border-top: 1px solid #000; margin-bottom: 3px; }
.strip > button { height: 24px; padding: 0 11px; background: #4b4b4b; border: 1px solid #696969; }
.strip > button.on { background: #4470ff; border-color: #5c82f5; }
.order { display: flex; gap: 10px; padding: 0 6px 0 3px; }
.order button { gap: 6px; }
.strip > .cfg { margin-left: auto; padding: 0; background: none; border: 0; color: #b0c4dc; }

.work { flex: 1; display: flex; background: #343b4b; }
.panel { width: 341px; display: flex; flex-direction: column; background: #3d3d3d; margin-bottom: 3px; }
h1 { display: flex; align-items: center; gap: 4px; margin: 0; font: inherit; height: 25px; background: #2d333f; padding-left: 3px; }
.dots { width: 5px; height: 11px; }
.filter { display: flex; align-items: center; height: 50px; }
.filter .pick { height: 28px; border: 1px solid #6b6b6b; }
.floors { width: 80px; margin-right: 5px; }
.find { width: 86px; margin-right: 5px; }
.filter select, .find input { width: 100%; padding: 0 4px; background: none; border: 0; outline: 0; }
.find input::placeholder { color: #a0a0a0; opacity: 1; }
.filter label { display: flex; align-items: center; gap: 4px; margin-right: 6px; }
input[type=radio] { appearance: none; width: 14px; height: 14px; border: 1px solid #5f5f5f; border-radius: 50%; background: #303030; }
input[type=radio]:checked { background: radial-gradient(circle, #f4f4f4 4px, #303030 5px); }
.ham { width: 20px; height: 20px; border: 1px solid #6b6b6b; background: #4b4b4b; margin-left: -2px; }
.ham svg { width: 16px; height: 14px; }
.treebox { flex: 1; display: flex; background: #282828; border-bottom: 1px solid #707070; }
.tree { flex: 1; list-style: none; margin: 0 1px 0 0; padding: 0; }
.tree li { display: flex; align-items: center; height: 32px; padding-right: 1px; }
.tree .sel { background: #4470ff; font-weight: bold; }
.tree label { display: flex; align-items: center; gap: 5px; padding-left: 2px; }
.tree label svg { margin-right: 1px; }
.tree label span { padding-top: 2px; }
.tail { margin-left: auto; }
.next { margin-left: 13px; }
.sel .tail, .next { margin-right: 1px; }
.g { position: relative; width: 20px; height: 32px; flex: none; }
.line::before, .tee::before, .end::before { content: ""; position: absolute; left: 8px; top: 0; width: 1px; height: 100%; background: #707070; }
.end::before { height: 16px; }
.tee, .end { background: linear-gradient(#707070, #707070) 9px 15px / 10px 1px no-repeat; }
.open::after { content: ""; position: absolute; left: 6px; top: 12px; border: 3px solid #eee; border-left-color: transparent; border-top-color: transparent; }
input[type=checkbox] { appearance: none; position: relative; width: 14px; height: 14px; border: 1px solid #6c6c6c; background: #2c2c2c; flex: none; }
input[type=checkbox].dim { border-color: #424242; background: #282828; }
input[type=checkbox]:checked::after { content: ""; position: absolute; left: 4px; top: 0; width: 4px; height: 8px; border: solid #666; border-width: 0 2px 2px 0; transform: rotate(42deg); }
.sel input[type=checkbox] { background: #3c69a8; border-color: #8fa9d8; }
.sel input[type=checkbox]:checked::after { border-color: #9ad4ff; }
.scroll { width: 17px; display: flex; flex-direction: column; background: #3d3d3d; }
.scroll svg { width: 16px; height: 38px; }
.track { flex: 1; display: flex; flex-direction: column; justify-content: flex-end; background: #282828; padding-right: 2px; }
.thumb { height: 56%; background: #3f3f3f; border: 1px solid #505050; }
.foot { display: flex; align-items: center; height: 56px; }
.toolbtn { width: 36px; height: 36px; background: #4b4b4b; border-radius: 6px; margin-right: 12px; }
.split { display: flex; height: 33px; border: 1px solid #696969; background: #4b4b4b; margin-right: 16px; }
.split button { gap: 6px; padding: 0 8px 0 9px; }
.split .upb { border-left: 1px solid #696969; width: 27px; padding: 0; }
.upb svg { width: 12px; height: 14px; }

.view { flex: 1; min-width: 0; margin-left: 2px; display: flex; flex-direction: column; }
.canvas { position: relative; flex: 1; background: #212830; overflow: hidden; }
.vlabel { position: absolute; left: 3px; top: 7px; word-spacing: 0; }
.winbtns { position: absolute; right: 11px; top: 10px; display: flex; gap: 10px; }
.plan { position: absolute; left: 407px; top: 291px; width: 260px; height: 185px; }
.axes { position: absolute; left: 181px; top: 571px; width: 72px; height: 74px; }
.hair { position: absolute; background: #fff; }
.hair.h { left: 0; right: 0; top: 556px; height: 1px; }
.hair.v { left: 751px; top: 0; bottom: 0; width: 1px; }
.pickbox { position: absolute; left: 744px; top: 548px; width: 15px; height: 17px; border: 1px solid #fff; background: #212830; }
.cube { position: absolute; right: 23px; top: 46px; width: 120px; height: 120px; border: 13px solid #444b53; border-radius: 50%; font-size: 18px; line-height: 18px; color: #a9acb0; }
.cube span { position: absolute; }
.n { left: 38px; top: -18px; }
.s { left: 38px; bottom: -19px; }
.w { left: -19px; top: 38px; }
.e { right: -18px; top: 38px; }
.face { position: absolute; left: 21px; top: 21px; width: 52px; height: 52px; background: linear-gradient(#a09fa8, #a09fa8) center / 32px 32px no-repeat #adb2b0; border: 1px solid #75797a; color: #50555c; font-size: 30px; font-weight: 300; line-height: 32px; }
.wcs { position: absolute; right: 59px; top: 193px; width: 48px; height: 18px; border-radius: 4px; border: 1px solid #75797f; background: #9c9da3; color: #54585f; font: 11px/14px "Liberation Sans", sans-serif; gap: 6px; }
.wcs svg { width: 9px; height: 6px; }
.status { position: absolute; left: 0; right: 0; bottom: 6px; text-align: center; font: 300 18px/24px "Liberation Sans", "Noto Sans CJK SC", sans-serif; color: #fff; }
.status p { margin: 0; }
.cmd { display: flex; margin-top: 2px; margin-bottom: 1px; background: #2b303c; }
.cmdside { width: 25px; display: flex; flex-direction: column; align-items: center; justify-content: space-between; padding: 4px 2px 3px 0; }
.grip { width: 18px; height: 6px; }
.cmdmain { flex: 1; padding-top: 1px; color: #111; font: 13px/15px "Liberation Mono", "Noto Sans CJK SC", monospace; }
.log { background: #c8c8c8; padding: 3px 2px; height: 36px; border-bottom: 1px solid #222831; }
.entry { display: flex; align-items: center; background: #fff; padding: 0 4px; gap: 7px; height: 18px; }
.entry svg { width: 26px; height: 12px; }
.entry input { flex: 1; border: 0; outline: 0; background: none; padding: 1px 0 0; height: 18px; font-style: italic; }
.entry input::placeholder { color: #777; opacity: 1; }
```
